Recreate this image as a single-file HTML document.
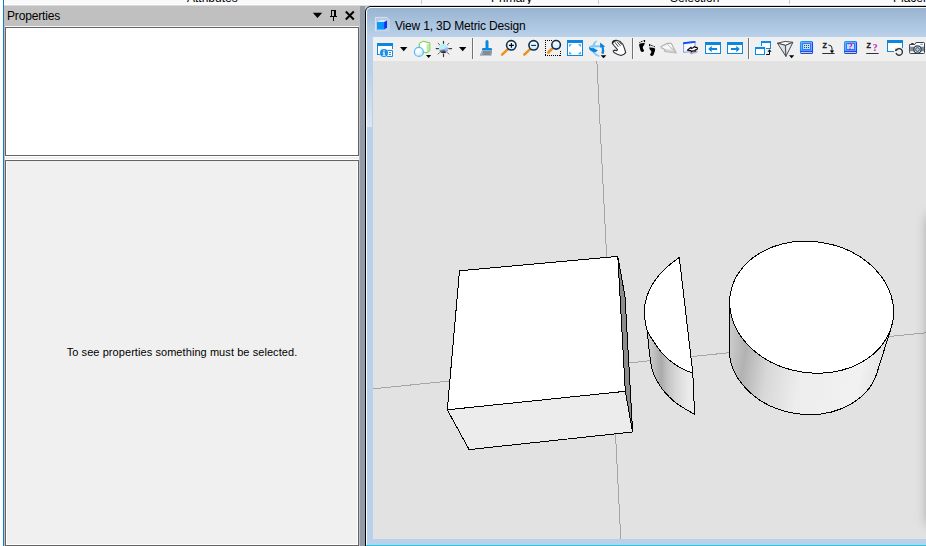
<!DOCTYPE html>
<html>
<head>
<meta charset="utf-8">
<title>View 1, 3D Metric Design</title>
<style>
html,body{margin:0;padding:0;}
body{width:926px;height:546px;overflow:hidden;position:relative;background:#fafafa;font-family:"Liberation Sans",sans-serif;font-size:12px;color:#000;}
.abs{position:absolute;}
#topstrip{left:0;top:0;width:926px;height:5px;background:#fafafa;overflow:hidden;}
#topline{left:0;top:4px;width:926px;height:2px;background:linear-gradient(#ffffff 0,#ffffff 50%,#d9d9e1 50%,#d9d9e1 100%);}
.tab{position:absolute;top:-9.3px;font-size:12px;line-height:14px;white-space:nowrap;color:#000;}
.tsep{position:absolute;top:0;width:1px;height:4px;background:#c6c6d8;}
#leftedge{left:0;top:0;width:3px;height:546px;background:#fdfdfd;}
#blueline{left:3px;top:0;width:1px;height:546px;background:#0f7cd0;}
#leftbg{left:4px;top:6px;width:356px;height:540px;background:#c0c0c0;}
#ptitle{left:4px;top:6px;width:356px;height:21px;background:#c0c0c0;}
#ptitle span{position:absolute;left:3px;top:3px;letter-spacing:-0.15px;font-size:12px;line-height:14px;}
#box1{left:5px;top:27px;width:352px;height:127px;background:#fff;border:1px solid #646464;}
#gap{left:5px;top:156px;width:354px;height:4px;background:#f0f0f0;border-top:1px solid #fff;border-bottom:1px solid #fff;box-sizing:border-box;}
#box2{left:5px;top:160px;width:352px;height:384px;background:#f0f0f0;border:1px solid #646464;box-shadow:inset 1px 0 0 #fff,inset -1px -1px 0 #fff;}
#msg{left:6px;top:346px;width:352px;letter-spacing:0.07px;text-align:center;font-size:11px;line-height:13px;white-space:nowrap;}
#split{left:360px;top:6px;width:5px;height:540px;background:#929ca8;}
#win{left:365px;top:6px;width:600px;height:560px;background:#b9d1ea;border:1px solid #000;border-radius:6px 0 0 0;box-sizing:border-box;overflow:hidden;}
#winin{left:0;top:0;width:600px;height:538px;border-left:1px solid #fff;border-top:1px solid #fff;border-radius:5px 0 0 0;background:linear-gradient(#99b4d1 0px,#b9d1ea 29px,#b9d1ea 100%);}
#wtitle{left:395px;top:19px;letter-spacing:-0.17px;font-size:12px;line-height:14px;white-space:nowrap;}
#toolbar{left:373px;top:37px;width:553px;height:24px;background:#f0f0f0;}
#canvas{left:373px;top:61px;width:553px;height:478px;background:#e2e2e2;overflow:hidden;}
#cyan{left:366px;top:545px;width:560px;height:1px;background:#1fcbe2;}
</style>
</head>
<body>
<div id="topstrip" class="abs">
  <span class="tab" style="left:187px">Attributes</span>
  <span class="tab" style="left:491px">Primary</span>
  <span class="tab" style="left:670px">Selection</span>
  <span class="tab" style="left:893px">Placement</span>
  <div class="tsep" style="left:421px"></div>
  <div class="tsep" style="left:598px"></div>
  <div class="tsep" style="left:789px"></div>
</div>
<div id="topline" class="abs"></div>
<div id="leftedge" class="abs"></div>
<div id="blueline" class="abs"></div>
<div id="leftbg" class="abs"></div>
<div id="ptitle" class="abs"><span>Properties</span>
<svg class="abs" style="left:305px;top:2px" width="50" height="18" viewBox="309 8 50 18">
  <path d="M312.800 12.800h9.400l-4.700 5.200z" fill="#000"/>
  <path d="M331 10h5v1h-5zM331 10h1v6h-1zM334 10h2v6h-2zM330 16h7v1h-7zM333 17h1v4h-1z" fill="#000" shape-rendering="crispEdges"/>
  <path d="M345.8 11.5l8 8M353.8 11.5l-8 8" stroke="#000" stroke-width="2" fill="none"/>
</svg>
</div>
<div class="abs" style="left:5px;top:26px;width:354px;height:1px;background:#f6f6f6"></div>
<div id="box1" class="abs"></div>
<div id="gap" class="abs"></div>
<div id="box2" class="abs"></div>
<div id="msg" class="abs">To see properties something must be selected.</div>
<div id="split" class="abs"></div>
<div class="abs" style="left:365px;top:6px;width:8px;height:8px;background:#c3c3c3"></div>
<div id="win" class="abs"><div id="winin" class="abs"></div></div>
<svg id="wicon" class="abs" style="left:373px;top:15px" width="20" height="20" viewBox="373 15 20 20">
  <path d="M375 17h11.700l3.300 3.400v11.100h-15z" fill="rgba(255,255,255,0.2)"/>
  <path d="M375.400 31v-13.600h11.200l3 3.100" fill="none" stroke="rgba(255,255,255,0.55)" stroke-width="0.800"/>
  <path d="M377 22l4.200-2.300 5.900.9-3.100 2z" fill="#d4ecff"/>
  <path d="M377 22h7.100v7.500h-7.100z" fill="#0a96fc"/>
  <path d="M384.100 22l2.900-1.500v7.300l-2.900 1.700z" fill="#0a36f2"/>
</svg>
<div class="abs" style="left:367px;top:72px;width:5px;height:55px;background:linear-gradient(to bottom,rgba(255,255,255,0),rgba(255,255,255,0.48))"></div>
<div id="wtitle" class="abs">View 1, 3D Metric Design</div>
<div id="toolbar" class="abs">
<!--TOOLBAR-->
<svg class="abs" style="left:0;top:0" width="553" height="24" viewBox="373 37 553 24">
<defs>
  <radialGradient id="gSph" cx="0.38" cy="0.32" r="0.75"><stop offset="0" stop-color="#ffffff"/><stop offset="0.45" stop-color="#f0f8fe"/><stop offset="1" stop-color="#b4defb"/></radialGradient>
  <linearGradient id="gSun" x1="0.35" y1="0" x2="0.55" y2="1"><stop offset="0" stop-color="#a2f2fb"/><stop offset="0.5" stop-color="#c2eefa"/><stop offset="0.72" stop-color="#5c6474"/><stop offset="0.9" stop-color="#2c2c34"/></linearGradient>
  <radialGradient id="gSun2" cx="0.92" cy="0.62" r="0.36"><stop offset="0" stop-color="#aab4f6"/><stop offset="0.6" stop-color="#aab4f6" stop-opacity="0.8"/><stop offset="1" stop-color="#aab4f6" stop-opacity="0"/></radialGradient>
  <linearGradient id="gLens" x1="0" y1="0" x2="0" y2="1"><stop offset="0" stop-color="#ffffff"/><stop offset="1" stop-color="#cfeaf9"/></linearGradient>
  <linearGradient id="gPanel" x1="0" y1="0" x2="0" y2="1"><stop offset="0" stop-color="#38b8ff"/><stop offset="1" stop-color="#5a8cf0"/></linearGradient>
  <linearGradient id="gPlane" x1="0" y1="0" x2="0.6" y2="1"><stop offset="0" stop-color="#d4d4d4"/><stop offset="0.45" stop-color="#ffffff"/><stop offset="1" stop-color="#d8d8d8"/></linearGradient>
  <linearGradient id="gPyr" x1="0" y1="0" x2="1" y2="0"><stop offset="0" stop-color="#fafafa"/><stop offset="1" stop-color="#cfd3d7"/></linearGradient>
  <linearGradient id="gPanelS" x1="0" y1="0" x2="1" y2="1"><stop offset="0" stop-color="#0aa8ff"/><stop offset="0.5" stop-color="#0a84ff"/><stop offset="0.55" stop-color="#0a50ff"/><stop offset="1" stop-color="#0a48ff"/></linearGradient>
</defs>
<!-- separators -->
<g fill="#727272"><rect x="472" y="38" width="1" height="21"/><rect x="632" y="38" width="1" height="21"/><rect x="748" y="38" width="1" height="21"/></g>
<g fill="#fbfbfb"><rect x="473" y="38" width="1" height="21"/><rect x="633" y="38" width="1" height="21"/><rect x="749" y="38" width="1" height="21"/></g>

<!-- 1 view attributes -->
<g>
  <rect x="377.500" y="43.500" width="15" height="11" fill="#fff" stroke="#0c87e0"/>
  <rect x="377" y="43" width="16" height="3" fill="#0c87e0"/>
  <rect x="386" y="49" width="8" height="7" fill="#f0f0f0"/>
  <path d="M387 50.500h5.500v6h-5.500" fill="#fff" stroke="#1a8fe8"/>
  <path d="M388.900 52.500h2.100M388.900 54.500h2.100" stroke="#1a8fe8" stroke-width="1"/>
  <circle cx="384" cy="53.100" r="4.500" fill="#f0f0f0"/>
  <circle cx="384" cy="53.100" r="4" fill="#1a8fe8"/>
  <path d="M383.300 50.300h1.400v1.100h-1.400zM382.800 52.300h1.900v2.600h.8v.9h-3v-.9h.9v-1.700h-.6z" fill="#fff"/>
</g>
<path d="M400 47h7.4l-3.7 4.3z" fill="#000"/>

<!-- 2 display style -->
<g>
  <path d="M419.300 43.300l3.900-2 6.600 1.500v7.900l-2.700 2-7.800-1.200z" fill="#fff" stroke="#6ccc3c" stroke-width="1" stroke-linejoin="round"/>
  <path d="M426.600 44.400l2.700-1.300v7.400l-2.700 1.900z" fill="#bdeaa4"/>
  <circle cx="418.900" cy="51.900" r="4.500" fill="url(#gSph)" stroke="#58bafc" stroke-width="1.200"/>
  <path d="M426 55h5.200l-2.600 3z" fill="#000"/>
</g>

<!-- 3 brightness -->
<g>
  <g stroke="#3a3a40" stroke-width="1.200" stroke-linecap="round">
    <path d="M443.500 41.300v2M443.500 54v2.600M436.200 48.600h2.400M448.800 48.600h2.800"/>
    <path d="M438.100 43.300l1.500 1.500M448.900 43.300l-1.500 1.500M438.100 54.100l1.500-1.500M448.900 54.100l-1.500-1.500" stroke="#5a5a62" stroke-width="1"/>
  </g>
  <circle cx="443.500" cy="48.700" r="4.600" fill="url(#gSun)"/>
  <circle cx="443.500" cy="48.700" r="4.600" fill="url(#gSun2)"/>
</g>
<path d="M459 47h7.4l-3.7 4.3z" fill="#000"/>

<!-- 4 brush -->
<g>
  <path d="M479.8 55.6l2.4-5h9.8l-.8 5z" fill="#808c98"/>
  <path d="M479.8 55.6l2.4-5h1.2l-1.2 5z" fill="#a8b0b8"/>
  <path d="M490.6 50.6h1.4l-.8 5h-1.2z" fill="#98a2ac"/>
  <path d="M482 50.3v-1.4q0-1 1.200-1h2.300v-6.500q0-1.500 1.500-1.500t1.500 1.500v6.500h2.300q1.200 0 1.200 1v1.400z" fill="#0c87e0"/>
</g>

<!-- 5 zoom in -->
<g>
  <path d="M507.300 49.600l-5.200 5" stroke="#ef8f1c" stroke-width="2.500" stroke-linecap="round"/>
  <circle cx="511.300" cy="45.300" r="4.700" fill="url(#gLens)" stroke="#0e2f4e" stroke-width="1.600"/>
  <path d="M509 45.400h4.800M511.400 43v4.800" stroke="#000" stroke-width="1.100"/>
</g>
<!-- 6 zoom out -->
<g>
  <path d="M529.600 49.600l-5.300 5" stroke="#ef8f1c" stroke-width="2.500" stroke-linecap="round"/>
  <circle cx="533.600" cy="45.300" r="4.700" fill="url(#gLens)" stroke="#0e2f4e" stroke-width="1.600"/>
  <path d="M531.200 45.400h4.800" stroke="#0e2f4e" stroke-width="1.100"/>
</g>
<!-- 7 window area -->
<g>
  <path d="M545 40h1v1h-1zM545 42h1v1h-1zM545 44h1v1h-1zM545 46h1v1h-1zM545 48h1v1h-1zM545 50h1v1h-1zM545 52h1v1h-1zM545 54h1v1h-1zM545 55h1v1h-1zM547 40h1v1h-1zM547 55h1v1h-1zM549 40h1v1h-1zM549 55h1v1h-1zM551 40h1v1h-1zM551 55h1v1h-1zM553 55h1v1h-1zM555 55h1v1h-1zM557 55h1v1h-1zM559 55h1v1h-1zM560 51h1v1h-1zM560 53h1v1h-1zM560 55h1v1h-1z" fill="#000" shape-rendering="crispEdges"/>
  <path d="M551.800 49l-3.500 3.500" stroke="#ef8f1c" stroke-width="2.500" stroke-linecap="round"/>
  <circle cx="556.100" cy="44.800" r="4.300" fill="url(#gLens)" stroke="#0e2f4e" stroke-width="1.600"/>
</g>
<!-- 8 fit view -->
<g>
  <rect x="567.500" y="40.500" width="15" height="15" fill="#fff" stroke="#0c87e0"/>
  <rect x="567" y="40" width="16" height="3" fill="#0c87e0"/>
  <g fill="#3b9cea"><path d="M569.200 44.300h2.800l-2.800 2.800z"/><path d="M580.800 44.300h-2.800l2.800 2.800z"/><path d="M569.200 54.200h2.800l-2.800-2.800z"/><path d="M580.800 54.200h-2.800l2.800-2.800z"/></g>
</g>
<!-- 9 rotate view -->
<g>
  <path d="M596.300 40.500Q592.900 42 592.500 45.700L594.700 45.700Q595.100 42.600 597.300 41.200Z" fill="#86ccfa"/>
  <path d="M589.100 46.800Q589.900 45.200 592 45.200L600.400 45.200L600.400 47.300L589.400 47.500Z" fill="#7ec8fa"/>
  <path d="M589 46.900Q588.600 50.200 592.900 52L593.600 53.200L598 50.500L592.500 47.400L592.600 48.200Q590.500 47.800 589 46.900Z" fill="#0a84e0"/>
  <path d="M593.100 52.500Q594.500 56.100 599.300 56.900L599.600 55.600Q596.600 55 595.100 52.100Z" fill="#86ccfa"/>
  <path d="M600.100 42.500L605.100 46.600L603.700 46.900Q604.700 50.500 603.700 54L601.400 53.600Q602.400 50.500 601.600 47.300L600.100 47.700Z" fill="#0a84e0"/>
  <path d="M600.700 55.200h5.600l-2.800 3z" fill="#000"/>
</g>
<!-- 10 pan hand -->
<g>
  <path d="M612.300 43.300L613.200 41.200L616.300 40.300L619.700 41.200L622.900 44.400L624.500 48.500L625.700 52.500L624.100 54.200L620.900 55.500L617.300 54.200L614 52.600L613.200 51L614.400 50.100L616.800 50.800L617.500 49.600L614 45.500Z" fill="#fff" stroke="#2c323a" stroke-width="1.100" stroke-linejoin="round"/>
  <path d="M614.800 42.200l3.600 4.600M616.900 41.500l3.600 4.400M619 41.500l2.600 3.100" stroke="#2c323a" stroke-width=".9" fill="none"/>
  <path d="M612.400 43.200l1-1.900 2.600-.8" stroke="#1c2026" stroke-width="1.600" fill="none" stroke-linejoin="round"/>
</g>
<!-- 11 walk feet -->
<g fill="#000">
  <path d="M639.200 44Q641.500 42.800 644.800 43.100Q644.600 45 643.100 46.600Q642.300 47.700 643.200 48.900Q644.600 50.300 643.800 51.300Q642.500 52.500 641 51.500Q640.200 50.500 640 48.800Q639 46.500 639.200 44Z"/>
  <path d="M639.400 42.600l.9-.5M640.900 41.900l1-.5M642.500 41.300l.9-.6" stroke="#000" stroke-width="1" fill="none"/>
  <rect x="643.900" y="40" width="1.200" height="2.200"/>
  <path d="M655.100 48.600Q652.800 47.200 649.200 47.500Q649.400 49.400 650.900 50.800Q651.900 51.800 651 53Q649.500 54.400 650.300 55.300Q651.600 56.500 653.100 55.500Q654 54.500 654.200 52.800Q655.300 50.600 655.100 48.600Z"/>
  <path d="M654.900 46.900l-.9-.5M653.400 46.200l-1-.4M651.800 45.600l-.9-.4" stroke="#000" stroke-width="1" fill="none"/>
  <rect x="649.100" y="44" width="1.200" height="2.200"/>
</g>
<!-- 12 fly -->
<g>
  <path d="M661.100 46.500L667.200 43.300L671.400 43.400L676.200 53L664.800 51.400L664.300 49.200L661.500 47.900Z" fill="url(#gPlane)" stroke="#b4b4b4" stroke-width="1.200" stroke-linejoin="round"/>
  <path d="M664.500 49.300L675.600 52.700" stroke="#c6c6c6" stroke-width="1" fill="none"/>
  <path d="M667.400 44.300L675.800 52.400" stroke="#bcbcbc" stroke-width="1" fill="none"/>
  <path d="M665 49.800L675 52.600L665.200 51.200Z" fill="#d2d2d2"/>
</g>
<!-- 13 navigate view -->
<g>
  <path d="M683.600 42.800l11.500-1.300v9.600l-11.500 1.300z" fill="#fbf8ff" stroke="#6fa0f8" stroke-width="1"/>
  <path d="M683.200 42.300l12.200-1.400v1.900l-12.200 1.400z" fill="#0c52f0"/>
  <path d="M688.600 51.600l8.600-1.600 .4 2.600-6.800 2z" fill="#b4acd8"/>
  <path d="M687.400 50.200l3.600-2.900.3 1.300 1.800-.8 1.600-1.300.6 1 1.800-.2.400 1.600-2.400 1 .3 1.200-2.400-.4-1.400 1.200-.6-1.300z" fill="#fff" stroke="#0c0c0c" stroke-width="1.100" stroke-linejoin="round"/>
</g>
<!-- 14 view previous -->
<g>
  <rect x="705.500" y="42.500" width="15" height="11" fill="#fff" stroke="#0c87e0"/>
  <rect x="705" y="42" width="16" height="3" fill="#0c87e0"/>
  <path d="M708.200 49l3.500-3.200v2.200h5.400v2h-5.400v2.200z" fill="#0c87e0"/>
</g>
<!-- 15 view next -->
<g>
  <rect x="727.500" y="42.500" width="15" height="11" fill="#fff" stroke="#0c87e0"/>
  <rect x="727" y="42" width="16" height="3" fill="#0c87e0"/>
  <path d="M739.800 49l-3.500-3.200v2.200h-5.400v2h5.400v2.200z" fill="#0c87e0"/>
</g>
<!-- 16 copy view -->
<g>
  <rect x="761.500" y="41.500" width="9" height="7" fill="#fff" stroke="#0c8ae8"/>
  <rect x="761" y="41" width="10" height="2" fill="#0c8ae8"/>
  <rect x="754" y="46" width="12" height="10" fill="#f0f0f0"/>
  <rect x="755.500" y="47.500" width="9" height="7" fill="#fff" stroke="#0c8ae8"/>
  <rect x="755" y="47" width="10" height="2" fill="#0c8ae8"/>
  <path d="M766.200 54.500h3.300v-3" stroke="#000" stroke-width="1" fill="none"/>
  <path d="M767.500 51.800l2-2.600 2 2.600z" fill="#000"/>
</g>
<!-- 17 view rotation -->
<g stroke="#454c54" stroke-width="1" stroke-linejoin="round">
  <path d="M777.500 43.200l7.700-1.800 7.700.9-7.400 3.100z" fill="#fbfbfb"/>
  <path d="M777.500 43.200l8 2.200.4 11z" fill="url(#gPyr)"/>
  <path d="M792.900 42.300l-7.400 3.100.4 11z" fill="#eceef0"/>
</g>
<path d="M789 55.300h5.200l-2.600 3z" fill="#000"/>
<!-- 18 display depth panel -->
<g>
  <rect x="800.5" y="41.500" width="12" height="12" rx="1.300" fill="#2a7cff" stroke="url(#gPanelS)" stroke-width="1.100"/>
  <rect x="801.5" y="42.500" width="10" height="8" fill="#2f86ff" stroke="#97a6de" stroke-width="0.900"/>
  <rect x="802" y="43" width="9" height="7" fill="#2a7cff"/>
  <rect x="803" y="44" width="7" height="5" fill="#b8e2ff"/>
  <g fill="#3c4654"><rect x="804" y="45" width="1" height="1"/><rect x="806" y="45" width="1" height="1"/><rect x="808" y="45" width="1" height="1"/><rect x="804" y="47" width="1" height="1"/><rect x="806" y="47" width="1" height="1"/><rect x="808" y="47" width="1" height="1"/></g>
  <rect x="800.3" y="50.800" width="12.400" height="1.200" fill="#0a50ff"/>
  <rect x="801" y="52" width="11" height="1" fill="#ecc8a4"/>
</g>
<!-- 19 set active depth -->
<g>
  <text x="822.600" y="47.800" font-family="Liberation Sans, sans-serif" font-weight="bold" font-size="7.200" fill="#1a1a1a" stroke="#1a1a1a" stroke-width="0.300">Z</text>
  <path d="M828.300 45q3.700.2 3.700 3v3.500" stroke="#222" stroke-width="1" fill="none"/>
  <path d="M829.800 50.500h4.400l-2.200 2.800z" fill="#000"/>
  <rect x="822.200" y="53" width="12.400" height="1" fill="#333"/>
</g>
<!-- 20 show display depth -->
<g>
  <rect x="844.5" y="41.500" width="12" height="12" rx="1.300" fill="#2a7cff" stroke="url(#gPanelS)" stroke-width="1.100"/>
  <rect x="845.5" y="42.500" width="10" height="8" fill="#2f86ff" stroke="#97a6de" stroke-width="0.900"/>
  <rect x="846" y="43" width="9" height="7" fill="#2a7cff"/>
  <rect x="847" y="44" width="7" height="5" fill="#b8e2ff"/>
  <text x="848.100" y="50.400" font-family="Liberation Serif, serif" font-weight="bold" font-size="9.500" fill="#c814c8">?</text>
  <rect x="844.3" y="50.800" width="12.400" height="1.200" fill="#0a50ff"/>
  <rect x="845" y="52" width="11" height="1" fill="#ecc8a4"/>
</g>
<!-- 21 show active depth -->
<g>
  <text x="866.600" y="47.800" font-family="Liberation Sans, sans-serif" font-weight="bold" font-size="7.200" fill="#1a1a1a" stroke="#1a1a1a" stroke-width="0.300">Z</text>
  <text x="872.800" y="51.300" font-family="Liberation Serif, serif" font-weight="bold" font-size="9.500" fill="#c412c4">?</text>
  <rect x="866.200" y="53" width="12.400" height="1" fill="#333"/>
</g>
<!-- 22 window with rotate -->
<g>
  <rect x="887.500" y="40.500" width="15" height="11" fill="#fff" stroke="#0c87e0"/>
  <rect x="887" y="40" width="16" height="3" fill="#0c87e0"/>
  <circle cx="899.200" cy="52" r="5.200" fill="#f0f0f0"/>
  <path d="M896.300 50.200a3.300 3.300 0 1 1 -.3 2.800" fill="none" stroke="#2a2e32" stroke-width="1.300"/>
  <path d="M894.800 51.200l1-2.600 1.800 2z" fill="#2a2e32"/>
</g>
<!-- 23 camera -->
<g>
  <path d="M911.200 44v-1h2.400v1z" fill="#2e343a"/>
  <path d="M909.600 44.500h5.200l1.200-2h7.700q.8 0 .8.800v9.400q0 .8-.8.800h-13.300q-.8 0-.8-.8z" fill="#fff" stroke="#39414a" stroke-width="1" stroke-linejoin="round"/>
  <rect x="910.100" y="46.700" width="13.900" height="4.600" fill="#808c98"/>
  <rect x="920.300" y="43.800" width="2.600" height="1" fill="#2c9cf0"/>
  <circle cx="917.500" cy="49.500" r="3.600" fill="#fff" stroke="#333b44" stroke-width="1.300"/>
  <circle cx="917.500" cy="49.500" r="1.900" fill="#a6dcff" stroke="#39414a" stroke-width="1"/>
</g>
</svg>
<!--/TOOLBAR-->
</div>
<div id="canvas" class="abs">
<svg class="abs" style="left:0;top:0" width="553" height="478" viewBox="373 61 553 478">
<!--SCENE-->
<defs>
<linearGradient id="gHalf" gradientUnits="userSpaceOnUse" x1="644" y1="0" x2="696" y2="0"><stop offset="0" stop-color="#cecece"/><stop offset="0.14" stop-color="#c8c8c8"/><stop offset="0.33" stop-color="#aaaaaa"/><stop offset="0.45" stop-color="#c2c2c2"/><stop offset="0.62" stop-color="#d8d8d8"/><stop offset="0.85" stop-color="#eaeaea"/><stop offset="1" stop-color="#eeeeee"/></linearGradient>
<linearGradient id="gCyl" gradientUnits="userSpaceOnUse" x1="729" y1="0" x2="895" y2="0"><stop offset="0" stop-color="#cdcdcd"/><stop offset="0.1" stop-color="#b2b2b2"/><stop offset="0.25" stop-color="#d8d8d8"/><stop offset="0.45" stop-color="#ededed"/><stop offset="0.8" stop-color="#f1f1f1"/><stop offset="1" stop-color="#dcdcdc"/></linearGradient>
</defs>
<g stroke="#a6a6a6" stroke-width="1" fill="none" shape-rendering="crispEdges"><path d="M596.8 60L620.8 540"/><path d="M373 388.8L926 332.8"/></g>
<g stroke="#000" stroke-width="1" stroke-linejoin="round" shape-rendering="crispEdges">
<path d="M617.8 256.4L625.1 297.1L632.6 432L625.3 391.3Z" fill="#8c8c8c"/>
<path d="M447.3 409.8L625.3 391.3L632.6 432L469.1 449.6Z" fill="#ececec"/>
<path d="M459.5 270.8L617.8 256.4L625.3 391.3L447.3 409.8Z" fill="#ffffff"/>
</g>
<g stroke="#000" stroke-width="1" stroke-linejoin="round" shape-rendering="crispEdges">
<path d="M644.2 311.0C644.4 312.8 645.1 318.8 645.6 322.0C646.1 325.2 646.7 325.9 647.2 330.0C647.7 334.1 648.2 341.5 648.7 346.5C649.2 351.5 649.9 356.6 650.4 360.0C650.9 363.4 651.0 364.2 651.5 366.6C652.0 369.0 652.7 371.7 653.7 374.3C654.7 376.9 656.0 379.4 657.6 382.0C659.2 384.6 661.1 387.6 663.1 390.2C665.1 392.8 667.3 395.1 669.7 397.4C672.1 399.7 674.6 402.0 677.4 404.0C680.1 406.0 683.3 407.8 686.2 409.5C689.1 411.2 693.2 413.6 694.6 414.4L692.8 373.2C690.8 372.3 684.5 370.1 680.5 367.9C676.5 365.6 672.2 362.4 668.9 359.7C665.6 356.9 663.4 354.7 660.7 351.4C658.0 348.1 654.8 343.3 652.5 339.9C650.2 336.4 648.4 333.9 647.2 330.7C646.0 327.5 645.6 324.1 645.1 320.8C644.6 317.5 644.4 312.6 644.2 311.0Z" fill="url(#gHalf)"/>
<path d="M679.3 257.4C677.8 258.5 673.4 261.7 670.6 264.0C667.8 266.3 665.0 268.6 662.4 271.4C659.8 274.1 657.1 277.3 654.9 280.5C652.7 283.7 650.8 287.0 649.2 290.4C647.7 293.8 646.4 297.7 645.6 301.1C644.8 304.5 644.3 307.7 644.2 311.0C644.1 314.3 644.6 317.5 645.1 320.8C645.6 324.1 646.0 327.5 647.2 330.7C648.4 333.9 650.2 336.4 652.5 339.9C654.8 343.3 658.0 348.1 660.7 351.4C663.4 354.7 665.6 356.9 668.9 359.7C672.2 362.4 676.5 365.6 680.5 367.9C684.5 370.1 690.8 372.3 692.8 373.2Z" fill="#ffffff"/>
</g>
<g stroke="#000" stroke-width="1" shape-rendering="crispEdges">
<ellipse cx="804.3" cy="354.4" rx="75.1" ry="59.7" transform="rotate(9.1 804.3 354.4)" fill="url(#gCyl)"/>
<path d="M891.2 327.7L876.9 373.1L729.5 350.0L729.6 302.4Z" fill="url(#gCyl)" stroke="none"/>
<path d="M891.2 327.7L876.9 373.1M729.6 302.4L729.5 350.0" fill="none"/>
<ellipse cx="811.6" cy="307.2" rx="82.4" ry="65.5" transform="rotate(9.1 811.6 307.2)" fill="#ffffff"/>
</g>
<!--/SCENE-->
</svg>
<div class="abs" style="left:557px;top:156px;width:40px;height:306px;box-shadow:0 0 12px 1px rgba(0,0,0,0.38);"></div>
</div>
<div id="cyan" class="abs"></div>
</body>
</html>
